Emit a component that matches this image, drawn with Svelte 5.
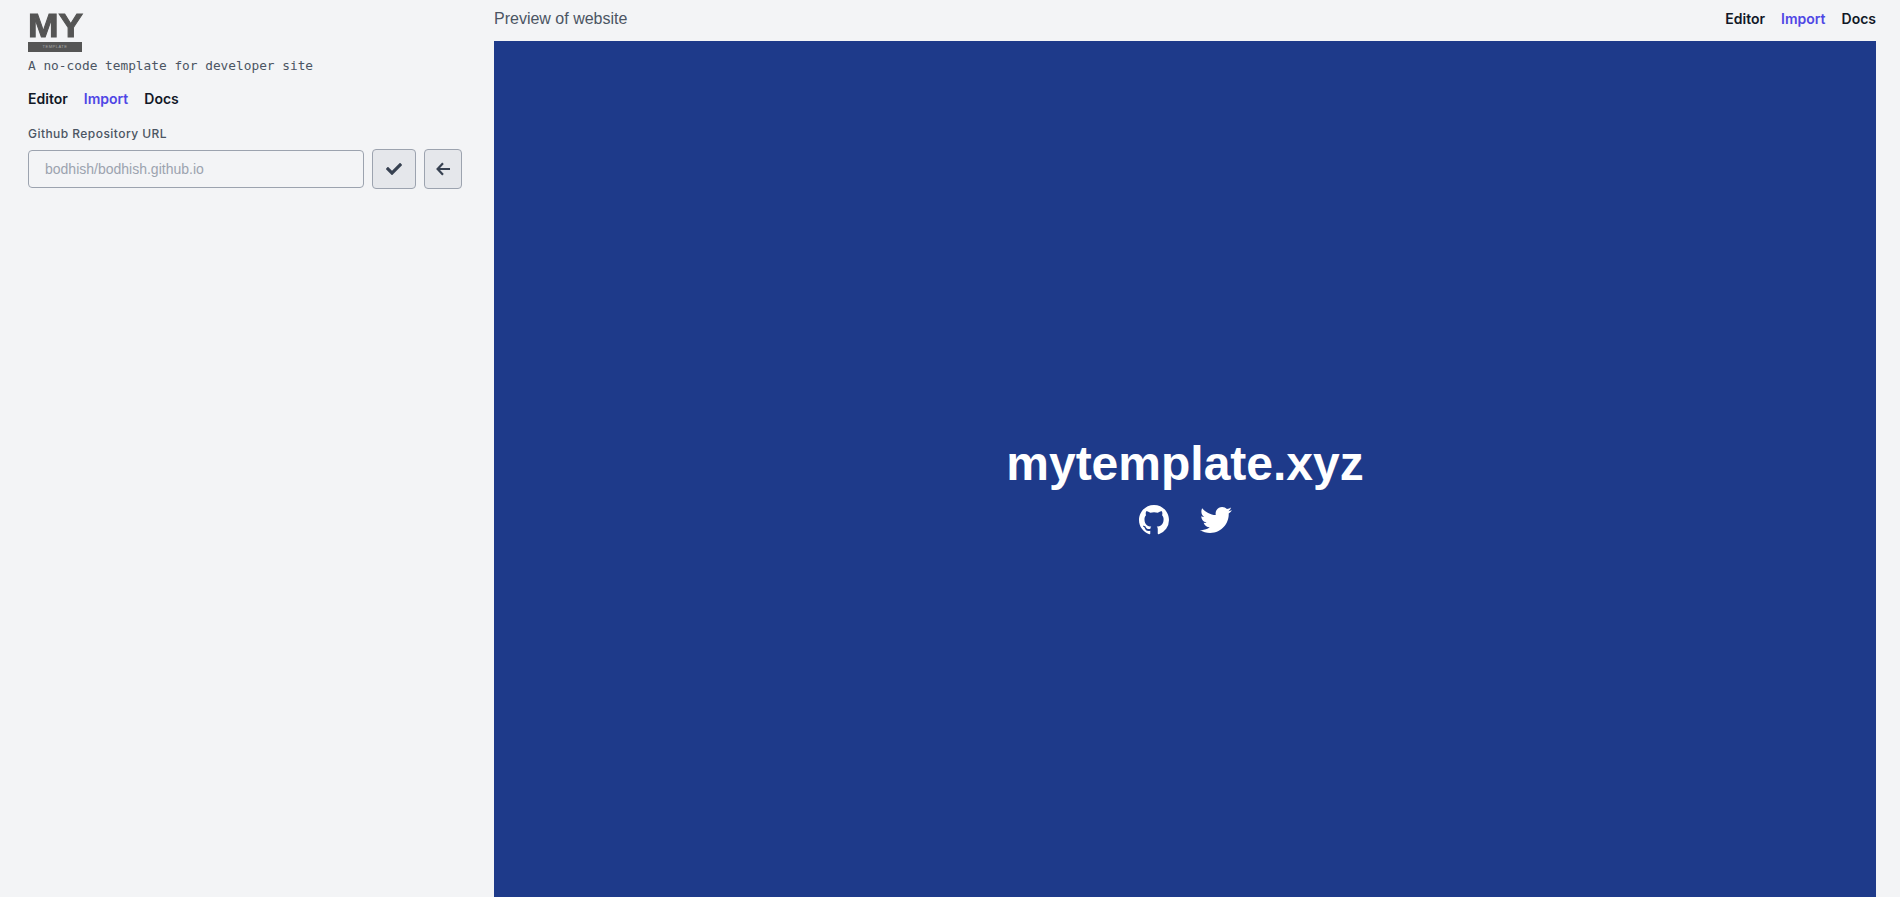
<script>
  let repo = $state('');

  const links = [
    { label: 'Editor', active: false },
    { label: 'Import', active: true },
    { label: 'Docs', active: false }
  ];
</script>

{#snippet nav()}
  <nav class="nav">
    {#each links as link}
      <a href="#top" class:active={link.active}>{link.label}</a>
    {/each}
  </nav>
{/snippet}

<div class="page">
  <aside class="sidebar">
    <div class="logo">
      <span class="logo-mark">MY</span>
      <span class="logo-bar">TEMPLATE</span>
    </div>
    <p class="tagline">A no-code template for developer site</p>
    {@render nav()}

    <label class="label" for="repo">Github Repository URL</label>
    <div class="repo-row">
      <input id="repo" type="text" placeholder="bodhish/bodhish.github.io" bind:value={repo} />
      <button class="check" aria-label="Import">
        <svg viewBox="0 0 512 512" width="16" height="16">
          <path d="M173.898 439.404l-166.4-166.4c-9.997-9.997-9.997-26.206 0-36.204l36.203-36.204c9.997-9.998 26.207-9.998 36.204 0L192 312.69 432.095 72.596c9.997-9.997 26.207-9.997 36.204 0l36.203 36.204c9.997 9.997 9.997 26.206 0 36.204l-294.4 294.401c-9.998 9.997-26.207 9.997-36.204-.001z" />
        </svg>
      </button>
      <button class="back" aria-label="Back">
        <svg viewBox="0 0 14 14" width="14" height="14" class="stroke">
          <path d="M7 1.2L1.6 7 7 12.8M2 7h12" />
        </svg>
      </button>
    </div>
  </aside>

  <main class="preview">
    <header class="preview-head">
      <span class="preview-title">Preview of website</span>
      {@render nav()}
    </header>
    <section class="canvas">
      <h1>mytemplate.xyz</h1>
      <div class="socials">
        <svg viewBox="0 0 16 16" width="30" height="30">
          <path d="M8 0C3.58 0 0 3.58 0 8c0 3.54 2.29 6.53 5.47 7.59.4.07.55-.17.55-.38 0-.19-.01-.82-.01-1.49-2.01.37-2.53-.49-2.69-.94-.09-.23-.48-.94-.82-1.13-.28-.15-.68-.52-.01-.53.63-.01 1.08.58 1.23.82.72 1.21 1.87.87 2.33.66.07-.52.28-.87.51-1.07-1.78-.2-3.64-.89-3.64-3.95 0-.87.31-1.59.82-2.15-.08-.2-.36-1.02.08-2.12 0 0 .67-.21 2.2.82.64-.18 1.32-.27 2-.27.68 0 1.36.09 2 .27 1.53-1.04 2.2-.82 2.2-.82.44 1.1.16 1.92.08 2.12.51.56.82 1.27.82 2.15 0 3.07-1.87 3.75-3.65 3.95.29.25.54.73.54 1.48 0 1.07-.01 1.93-.01 2.2 0 .21.15.46.55.38A8.013 8.013 0 0016 8c0-4.42-3.58-8-8-8z" />
        </svg>
        <svg viewBox="0 0 512 512" width="32" height="32">
          <path d="M459.37 151.716c.325 4.548.325 9.097.325 13.645 0 138.72-105.583 298.558-298.558 298.558-59.452 0-114.68-17.219-161.137-47.106 8.447.974 16.568 1.299 25.34 1.299 49.055 0 94.213-16.568 130.274-44.832-46.132-.975-84.792-31.188-98.112-72.772 6.498.974 12.995 1.624 19.818 1.624 9.421 0 18.843-1.3 27.614-3.573-48.081-9.747-84.143-51.98-84.143-102.985v-1.299c13.969 7.797 30.214 12.67 47.431 13.319-28.264-18.843-46.781-51.005-46.781-87.391 0-19.492 5.197-37.36 14.294-52.954 51.655 63.675 129.3 105.258 216.365 109.807-1.624-7.797-2.599-15.918-2.599-24.04 0-57.828 46.782-104.934 104.934-104.934 30.213 0 57.502 12.67 76.67 33.137 23.715-4.548 46.456-13.32 66.599-25.34-7.798 24.366-22.414 45.8-42.558 58.153 19.492-2.599 38.984-7.472 56.526-15.268-13.32 19.492-29.889 36.384-48.082 50.354z" />
        </svg>
      </div>
    </section>
  </main>
</div>

<style>
  :global(body) {
    margin: 0;
    background-color: #f3f4f6;
    overflow: hidden;
  }

  .page {
    display: flex;
    height: 897px;
    overflow: hidden;
    font-family: Inter, "Liberation Sans", sans-serif;
    color: #111827;
  }

  .sidebar {
    width: 494px;
    box-sizing: border-box;
    padding: 13px 32px 0 28px;
    flex-shrink: 0;
  }

  .logo {
    display: flex;
    flex-direction: column;
    width: 54px;
    color: #555;
    filter: blur(0.4px);
  }

  .logo-mark {
    font-family: "Liberation Sans", sans-serif;
    font-size: 34px;
    font-weight: 700;
    line-height: 25px;
    height: 25px;
    -webkit-text-stroke: 1px #555;
    transform: scaleX(1.08);
    transform-origin: left center;
  }

  .logo-bar {
    margin-top: 4px;
    height: 10px;
    background-color: #555;
    color: #aaa;
    font-family: "Liberation Sans", sans-serif;
    font-size: 4px;
    line-height: 10px;
    letter-spacing: 0.5px;
    text-align: center;
  }

  .tagline {
    margin: 6px 0 0;
    font-family: "DejaVu Sans Mono", monospace;
    font-size: 12.8px;
    line-height: 16px;
    color: #4b5563;
  }

  .nav {
    display: flex;
    gap: 16px;
    font-size: 14px;
    font-weight: 600;
    line-height: 20px;
  }

  .nav a {
    color: #111827;
    text-decoration: none;
  }

  .nav a.active {
    color: #4f46e5;
  }

  .sidebar .nav {
    margin-top: 15px;
  }

  .label {
    display: block;
    margin-top: 17px;
    font-size: 12px;
    font-weight: 500;
    line-height: 16px;
    letter-spacing: 0.45px;
    color: #4b5563;
  }

  .repo-row {
    display: flex;
    align-items: center;
    margin-top: 7px;
  }

  input {
    width: 336px;
    height: 38px;
    box-sizing: border-box;
    padding: 0 16px;
    border: 1px solid #9ca3af;
    border-radius: 4px;
    background: transparent;
    font-family: "Liberation Sans", sans-serif;
    font-size: 14px;
    color: #374151;
  }

  input::placeholder {
    color: #9ca3af;
  }

  button {
    display: flex;
    align-items: center;
    justify-content: center;
    height: 40px;
    box-sizing: border-box;
    padding: 0;
    border: 1px solid #9ca3af;
    border-radius: 4px;
    background-color: #e5e7eb;
  }

  button svg {
    fill: #374151;
  }

  button svg.stroke {
    fill: none;
    stroke: #374151;
    stroke-width: 2.2;
  }

  .check {
    width: 44px;
    margin-left: 8px;
  }

  .back {
    width: 38px;
    margin-left: 8px;
  }

  .preview {
    flex: 1;
    display: flex;
    flex-direction: column;
    padding-right: 24px;
    min-width: 0;
  }

  .preview-head {
    height: 41px;
    flex-shrink: 0;
    display: flex;
    align-items: center;
    justify-content: space-between;
    padding-bottom: 3px;
    box-sizing: border-box;
  }

  .preview-title {
    font-family: "Liberation Sans", sans-serif;
    font-size: 16px;
    color: #4b5563;
  }

  .canvas {
    height: 897px;
    flex-shrink: 0;
    box-sizing: border-box;
    padding-bottom: 3px;
    display: flex;
    flex-direction: column;
    align-items: center;
    justify-content: center;
    background-color: #1e3a8a;
    color: #fff;
  }

  h1 {
    margin: 0;
    font-family: "Liberation Sans", sans-serif;
    font-size: 48px;
    font-weight: 700;
    line-height: 48px;
  }

  .socials {
    display: flex;
    align-items: center;
    gap: 31px;
    margin-top: 16px;
  }

  .socials svg {
    fill: #fff;
  }
</style>
